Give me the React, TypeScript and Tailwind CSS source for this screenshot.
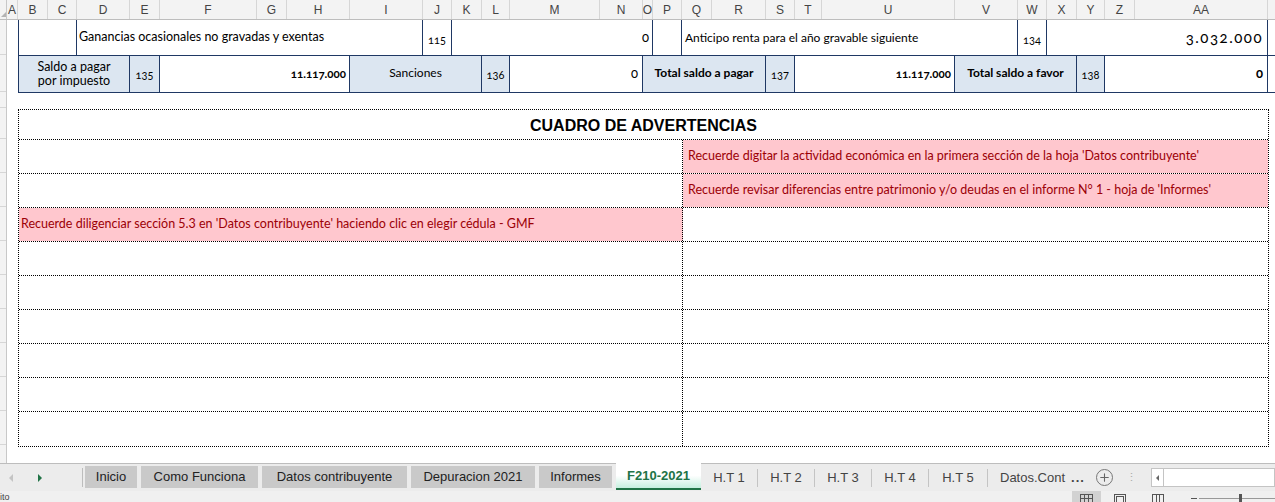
import { Plus } from 'lucide-react';

const columns = [
  { l: 'A', w: 'w-[11px]' },
  { l: 'B', w: 'w-[30px]' },
  { l: 'C', w: 'w-[29px]' },
  { l: 'D', w: 'w-[53px]' },
  { l: 'E', w: 'w-[30px]' },
  { l: 'F', w: 'w-[97px]' },
  { l: 'G', w: 'w-[30px]' },
  { l: 'H', w: 'w-[63px]' },
  { l: 'I', w: 'w-[73px]' },
  { l: 'J', w: 'w-[29px]' },
  { l: 'K', w: 'w-[30px]' },
  { l: 'L', w: 'w-[28px]' },
  { l: 'M', w: 'w-[90px]' },
  { l: 'N', w: 'w-[43px]' },
  { l: 'O', w: 'w-[10px]' },
  { l: 'P', w: 'w-[29px]' },
  { l: 'Q', w: 'w-[30px]' },
  { l: 'R', w: 'w-[54px]' },
  { l: 'S', w: 'w-[29px]' },
  { l: 'T', w: 'w-[27px]' },
  { l: 'U', w: 'w-[133px]' },
  { l: 'V', w: 'w-[63px]' },
  { l: 'W', w: 'w-[29px]' },
  { l: 'X', w: 'w-[30px]' },
  { l: 'Y', w: 'w-[28px]' },
  { l: 'Z', w: 'w-[30px]' },
  { l: 'AA', w: 'w-[133px]' },
];

// row header strip segments (heights follow the sheet rows)
const rowSegs = ['h-[35px]', 'h-[37px]', 'h-[16px]', 'h-[31px]', 'h-[34px]', 'h-[34px]', 'h-[34px]', 'h-[34px]', 'h-[34px]', 'h-[34px]', 'h-[34px]', 'h-[34px]', 'h-[34px]'];

const warnings: { left?: string; right?: string }[] = [
  { right: "Recuerde digitar la actividad económica en la primera sección de la hoja 'Datos contribuyente'" },
  { right: "Recuerde revisar diferencias entre patrimonio y/o deudas en el informe N° 1 - hoja de 'Informes'" },
  { left: "Recuerde diligenciar sección 5.3 en 'Datos contribuyente' haciendo clic en elegir cédula - GMF" },
  {},
  {},
  {},
  {},
  {},
  {},
];

const cell = 'shrink-0 h-full border-r border-[#1f3864] flex items-center';
const blue = 'bg-[#dce6f1]';

const App = () => {
  return (
    <div className="w-[1275px] h-[502px] overflow-hidden bg-white font-['Lato','Liberation_Sans',sans-serif] text-black">
      {/* Column headers */}
      <div className="flex h-[20px] bg-[#f3f3f3] border-b border-[#bdbdbd]">
        <div className="w-[7px] shrink-0 h-full border-r border-[#c8c8c8] flex items-end justify-end">
          <div className="w-0 h-0 border-l-[5px] border-l-transparent border-b-[5px] border-b-[#b4b4b4] mb-[2px]" />
        </div>
        {columns.map((c) => (
          <div
            key={c.l}
            className={`${c.w} shrink-0 h-full border-r border-[#d6d6d6] flex items-center justify-center text-[12px] text-[#444] font-['Liberation_Sans',sans-serif]`}
          >
            {c.l}
          </div>
        ))}
        <div className="flex-1" />
      </div>

      {/* Sheet body */}
      <div className="flex h-[443px] overflow-hidden">
        <div className="w-[7px] shrink-0 h-full bg-[#f3f3f3] border-r border-[#c8c8c8] flex flex-col">
          {rowSegs.map((h, i) => (
            <div key={i} className={`${h} shrink-0 border-b border-[#d6d6d6]`} />
          ))}
          <div className="flex-1" />
        </div>

        <div className="flex-1 flex flex-col">
          {/* Row 1 */}
          <div className="flex h-[36px] ml-[11px] border-b border-[#1f3864] text-[12px]">
            <div className={`${cell} w-[59px] border-l`} />
            <div className={`${cell} w-[346px] pl-[2px] text-[12.5px]`}>Ganancias ocasionales no gravadas y exentas</div>
            <div className={`${cell} w-[29px] justify-center pt-[5px] text-[11px] oldstyle-nums`}>115</div>
            <div className={`${cell} w-[201px] justify-end pr-[3px] text-[13px] oldstyle-nums`}>0</div>
            <div className={`${cell} w-[29px]`} />
            <div className={`${cell} w-[336px] pl-[3px]`}>Anticipo renta para el año gravable siguiente</div>
            <div className={`${cell} w-[29px] justify-center pt-[5px] text-[11px] oldstyle-nums`}>134</div>
            <div className={`${cell} w-[221px] justify-end pr-[4px] text-[15px] tracking-[1.5px] oldstyle-nums`}>3.032.000</div>
          </div>

          {/* Row 2 */}
          <div className="flex h-[37px] ml-[11px] border-b border-[#1f3864] text-[12px]">
            <div className={`${cell} ${blue} w-[112px] border-l justify-center text-center leading-[14px] text-[12.5px]`}>
              Saldo a pagar
              <br />
              por impuesto
            </div>
            <div className={`${cell} ${blue} w-[30px] justify-center pt-[2px] text-[11px] oldstyle-nums`}>135</div>
            <div className={`${cell} w-[190px] justify-end pr-[3px] font-bold text-[11.5px] oldstyle-nums`}>11.117.000</div>
            <div className={`${cell} ${blue} w-[132px] justify-center pb-[3px]`}>Sanciones</div>
            <div className={`${cell} ${blue} w-[28px] justify-center pt-[2px] text-[11px] oldstyle-nums`}>136</div>
            <div className={`${cell} w-[133px] justify-end pr-[4px] text-[13px] oldstyle-nums`}>0</div>
            <div className={`${cell} ${blue} w-[123px] justify-center font-bold pb-[3px]`}>Total saldo a pagar</div>
            <div className={`${cell} ${blue} w-[29px] justify-center pt-[2px] text-[11px] oldstyle-nums`}>137</div>
            <div className={`${cell} w-[160px] justify-end pr-[3px] font-bold text-[11.5px] oldstyle-nums`}>11.117.000</div>
            <div className={`${cell} ${blue} w-[122px] justify-center font-bold pb-[3px]`}>Total saldo a favor</div>
            <div className={`${cell} ${blue} w-[28px] justify-center pt-[2px] text-[11px] oldstyle-nums`}>138</div>
            <div className={`${cell} w-[163px] justify-end pr-[4px] font-bold text-[13px] oldstyle-nums`}>0</div>
          </div>

          {/* Cuadro de advertencias */}
          <div className="mt-[16px] ml-[11px] w-[1251px] border border-dotted border-black">
            <div className="h-[30px] border-b border-dotted border-black flex items-center justify-center font-['Liberation_Sans',sans-serif] font-bold text-[16px] pt-[2px]">
              CUADRO DE ADVERTENCIAS
            </div>
            {warnings.map((w, i) => (
              <div
                key={i}
                className={`flex h-[34px] text-[12.5px] text-[#9c0006] ${i < warnings.length - 1 ? 'border-b border-dotted border-black' : ''}`}
              >
                <div
                  className={`w-[664px] shrink-0 h-full border-r border-dotted border-black flex items-center pl-[2px] ${w.left ? 'bg-[#ffc7ce]' : ''}`}
                >
                  {w.left}
                </div>
                <div className={`flex-1 h-full flex items-center pl-[5px] ${w.right ? 'bg-[#ffc7ce]' : ''}`}>{w.right}</div>
              </div>
            ))}
          </div>
        </div>
      </div>

      {/* Sheet tabs */}
      <div className="flex items-stretch h-[28px] bg-[#ececec] border-t border-[#bdbdbd] font-['Liberation_Sans',sans-serif] text-[13px] text-[#222]">
        <div className="w-[82px] shrink-0 flex items-center">
          <span className="ml-[9px] w-0 h-0 border-y-[4px] border-y-transparent border-r-[4px] border-r-[#c4c4c4]" />
          <span className="ml-[25px] w-0 h-0 border-y-[4px] border-y-transparent border-l-[4px] border-l-[#217346]" />
        </div>
        <div className="w-px bg-[#bdbdbd] my-[4px]" />
        <div className="flex items-start gap-[4px] ml-[2px] pt-[2px]">
          <div className="w-[52px] h-[22px] bg-[#c9c9c9] flex items-center justify-center">Inicio</div>
          <div className="w-[117px] h-[22px] bg-[#c9c9c9] flex items-center justify-center">Como Funciona</div>
          <div className="w-[145px] h-[22px] bg-[#c9c9c9] flex items-center justify-center">Datos contribuyente</div>
          <div className="w-[124px] h-[22px] bg-[#c9c9c9] flex items-center justify-center">Depuracion 2021</div>
          <div className="w-[73px] h-[22px] bg-[#c9c9c9] flex items-center justify-center">Informes</div>
        </div>
        <div className="ml-[4px] w-[85px] h-[27px] -mt-px bg-gradient-to-b from-white via-white to-[#c6efdf] border-b-2 border-[#217346] flex items-center justify-center font-bold text-[#217346]">
          F210-2021
        </div>
        {['H.T 1', 'H.T 2', 'H.T 3', 'H.T 4', 'H.T 5'].map((t, i) => (
          <div key={t} className="flex items-center">
            <div className={`${i === 4 ? 'w-[58px]' : 'w-[56px]'} flex items-center justify-center text-[#444]`}>{t}</div>
            <div className="w-px h-[18px] bg-[#c4c4c4]" />
          </div>
        ))}
        <div className="w-[104px] flex items-center pl-[12px] text-[#444]">
          Datos.Cont <span className="ml-[6px] font-bold tracking-[1px]">...</span>
        </div>
        <div className="flex items-center ml-[4px] text-[#666]">
          <Plus className="w-[17px] h-[17px] rounded-full border border-[#777] p-[1px]" strokeWidth={2} />
        </div>
        <div className="flex items-center ml-[13px] text-[#aaa] text-[11px] leading-none">⋮</div>
        <div className="ml-[14px] flex-1 flex items-center">
          <div className="w-full h-[19px] bg-white border border-[#c4c4c4] flex">
            <div className="w-[12px] h-full border-r border-[#c4c4c4] flex items-center justify-center">
              <span className="w-0 h-0 border-y-[3px] border-y-transparent border-r-[3px] border-r-[#666]" />
            </div>
          </div>
        </div>
      </div>

      {/* Status bar */}
      <div className="flex h-[11px] bg-[#f0f0f0] overflow-hidden font-['Liberation_Sans',sans-serif] text-[9px] text-[#444]">
        <div className="pt-[2px] leading-[9px]">ito</div>
        <div className="flex-1" />
        <div className="w-[29px] h-full bg-[#d2d2d2] flex justify-center pt-[3px]">
          <svg width="13" height="10" viewBox="0 0 13 10" fill="none" stroke="#555" strokeWidth="1">
            <rect x="0.5" y="0.5" width="12" height="10" />
            <path d="M4.5 0.5V10M8.5 0.5V10M0.5 4.5H12.5" />
          </svg>
        </div>
        <div className="w-[38px] flex justify-center pt-[3px]">
          <svg width="12" height="10" viewBox="0 0 12 10" fill="none" stroke="#555" strokeWidth="1">
            <rect x="0.5" y="0.5" width="11" height="10" />
            <rect x="2.5" y="2.5" width="7" height="8" />
          </svg>
        </div>
        <div className="w-[38px] flex justify-center pt-[3px]">
          <svg width="12" height="10" viewBox="0 0 12 10" fill="none" stroke="#555" strokeWidth="1">
            <rect x="0.5" y="0.5" width="11" height="10" />
            <path d="M4.5 0.5V10M7.5 0.5V10" />
          </svg>
        </div>
        <div className="w-[98px] relative">
          <div className="absolute left-[14px] top-[7px] w-[6px] h-px bg-[#555]" />
          <div className="absolute left-[22px] right-0 top-[7px] h-px bg-[#999]" />
          <div className="absolute left-[62px] top-[3px] w-[3px] h-[8px] bg-[#555]" />
        </div>
      </div>
    </div>
  );
};

export default App;
